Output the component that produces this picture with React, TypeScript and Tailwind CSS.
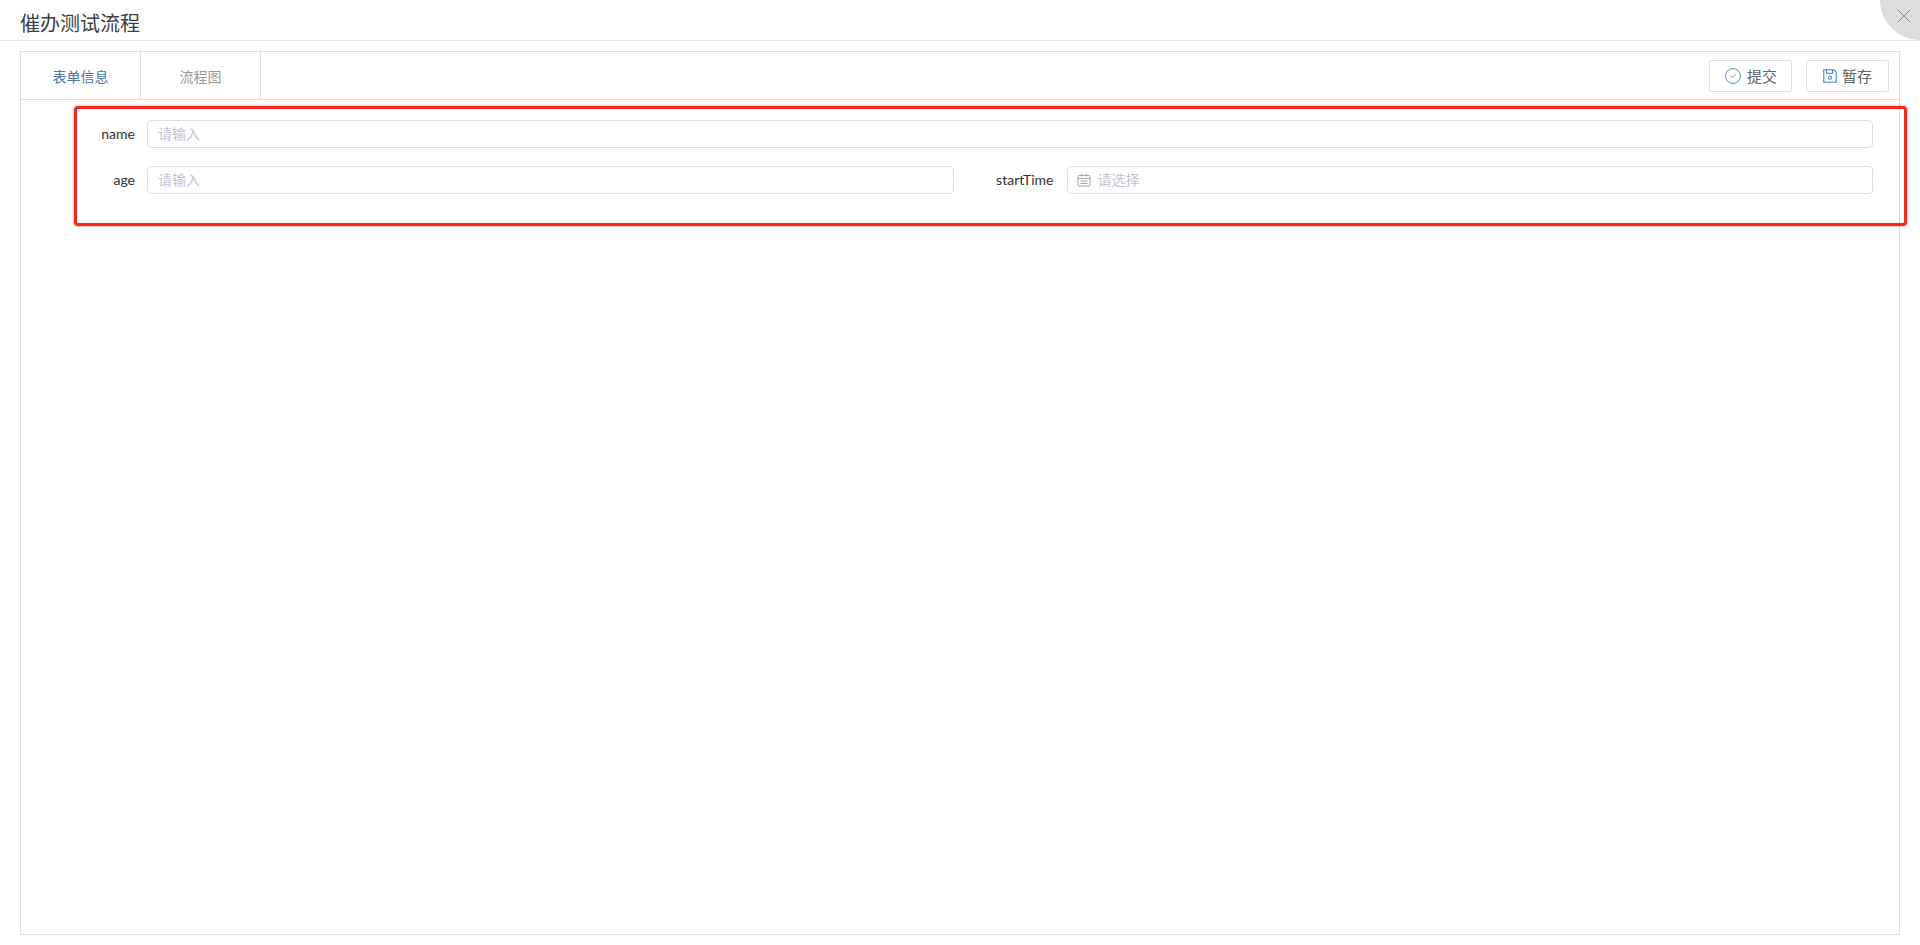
import React from 'react';
import { X, CircleCheck } from 'lucide-react';

const fontCls = "font-['Lato','Noto_Sans_CJK_SC',sans-serif]";

const Field: React.FC<{ label: string; placeholder: string; icon?: boolean; wide?: boolean }> = ({ label, placeholder, icon, wide }) => (
    <>
        <label className={`${icon ? 'pr-[13px]' : 'pr-3'} text-right text-sm leading-7 text-[#303133]`}>{label}</label>
        <div className={`flex h-7 items-center rounded-[4px] border border-[#dcdfe6] bg-white px-[10px] text-sm text-[#c0c4cc] ${wide ? 'col-span-3' : ''}`}>
            {icon && (
                <svg viewBox="0 0 14 14" className="-ml-px mr-[7px] h-[14px] w-[14px] text-[#a0a4ab]" fill="none" stroke="currentColor" strokeWidth="1">
                    <rect x="1" y="2.5" width="12" height="10.5" rx="1" />
                    <path d="M1 5.5h12M4.5 1v2.5M9.5 1v2.5M3.5 8h7M3.5 10.5h7" />
                </svg>
            )}
            <span>{placeholder}</span>
        </div>
    </>
);

const ActionButton: React.FC<{ text: string; children: React.ReactNode }> = ({ text, children }) => (
    <button className="flex h-[32px] w-[83px] items-center justify-center gap-[5px] rounded-[2px] border border-[#dcdfe6] bg-white text-[15px] text-[#606266]">
        {children}
        <span className="pt-px">{text}</span>
    </button>
);

export default function App() {
    return (
        <div className={`relative h-[945px] w-full overflow-hidden bg-white ${fontCls}`}>
            <header className="relative h-[41px] overflow-hidden border-b border-[#e4e7ed] pl-5">
                <h1 className="text-[20px] font-normal leading-[46px] text-[#3a3d42]">催办测试流程</h1>
                <div className="absolute -right-10 -top-10 h-20 w-20 rounded-full bg-[#dcdcdc]">
                    <X className="absolute left-[12px] top-[44px] h-6 w-6 text-[#8c8c8c]" strokeWidth={1} />
                </div>
            </header>

            <main className="mx-5 mt-[10px] h-[884px] border border-[#dcdfe6]">
                <div className="flex h-[48px] items-stretch justify-between border-b border-[#dcdfe6]">
                    <div className="flex text-[14px]">
                        <div className="flex w-[120px] items-center justify-center border-r border-[#dcdfe6] pt-px text-[#4a74ab]">表单信息</div>
                        <div className="flex w-[120px] items-center justify-center border-r border-[#dcdfe6] pt-px text-[#999999]">流程图</div>
                    </div>
                    <div className="flex items-center gap-[14px] pr-[10px]">
                        <ActionButton text="提交">
                            <CircleCheck className="h-[18px] w-[18px] text-[#3f84c8]" strokeWidth={1.2} />
                        </ActionButton>
                        <ActionButton text="暂存">
                            <svg viewBox="0 0 14 14" className="h-[14px] w-[14px] text-[#3f84c8]" fill="none" stroke="currentColor" strokeWidth="1.1">
                                <path d="M.8.8h10l2.4 2.4v10H.8z" />
                                <path d="M3.5.8v3.4h6V.8" />
                                <circle cx="7" cy="8.8" r="1.5" />
                            </svg>
                        </ActionButton>
                    </div>
                </div>

                <form className="grid grid-cols-[126px_1fr_113px_1fr] gap-y-[18px] pr-[26px] pt-5">
                    <Field label="name" placeholder="请输入" wide />
                    <Field label="age" placeholder="请输入" />
                    <Field label="startTime" placeholder="请选择" icon />
                </form>
            </main>

            {/* annotation drawn over the form */}
            <div className="pointer-events-none absolute left-[74px] top-[106px] h-[120px] w-[1833px] rounded-[4px] border-[3px] border-[#ee2a24] shadow-[0_0_2px_#ee2a24]" />
        </div>
    );
}
